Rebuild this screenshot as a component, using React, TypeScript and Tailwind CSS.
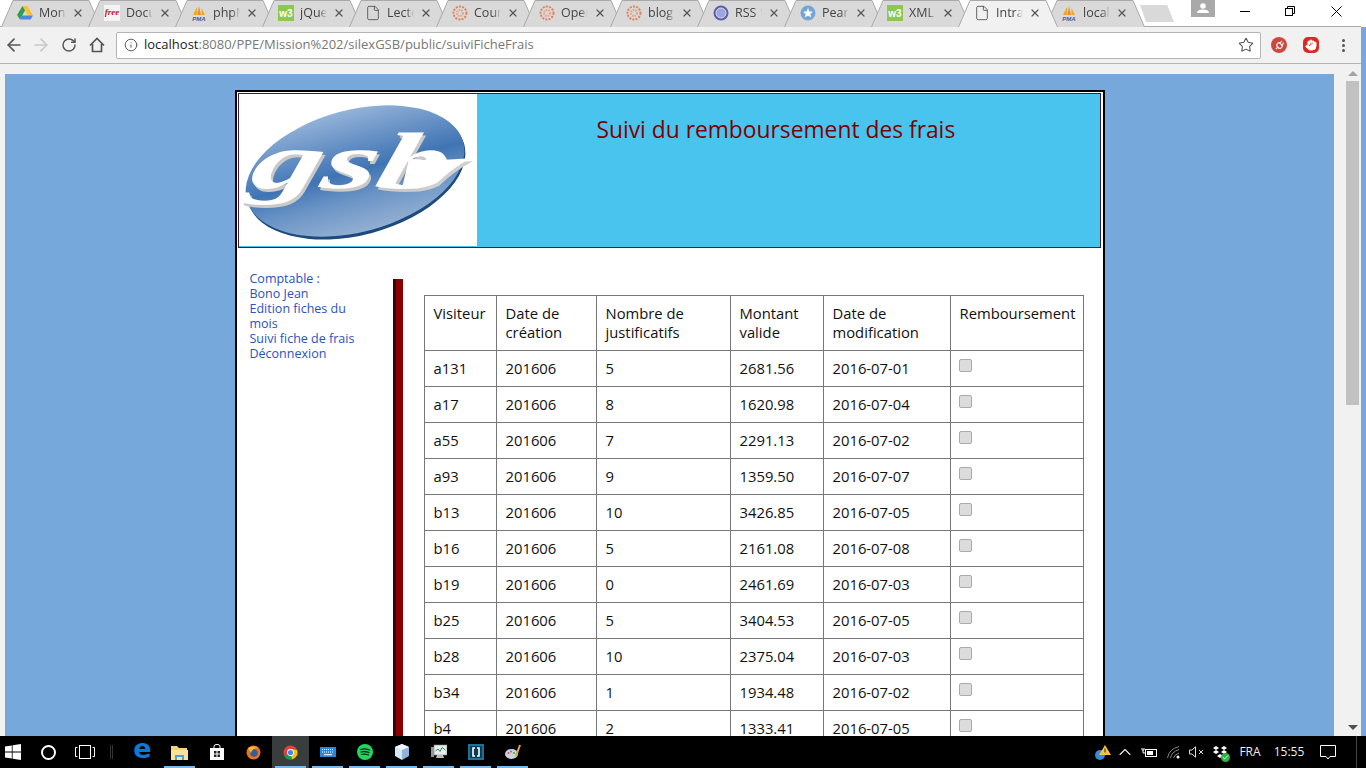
import React from 'react';
import { Star, File, Plug, Hand, RotateCw, Info, ChevronUp, ArrowLeft, ArrowRight, X, Check } from 'lucide-react';

const uiFont = "font-['Open_Sans','Noto_Sans',sans-serif]";

const rows = [
    ['a131', '201606', '5', '2681.56', '2016-07-01'],
    ['a17', '201606', '8', '1620.98', '2016-07-04'],
    ['a55', '201606', '7', '2291.13', '2016-07-02'],
    ['a93', '201606', '9', '1359.50', '2016-07-07'],
    ['b13', '201606', '10', '3426.85', '2016-07-05'],
    ['b16', '201606', '5', '2161.08', '2016-07-08'],
    ['b19', '201606', '0', '2461.69', '2016-07-03'],
    ['b25', '201606', '5', '3404.53', '2016-07-05'],
    ['b28', '201606', '10', '2375.04', '2016-07-03'],
    ['b34', '201606', '1', '1934.48', '2016-07-02'],
    ['b4', '201606', '2', '1333.41', '2016-07-05'],
];

const Drive = () => (
    <svg width="16" height="16" viewBox="0 0 16 16">
        <polygon points="5.5,1 10.5,1 16,10.5 11,10.5" fill="#fbc02d" />
        <polygon points="5.5,1 8,5.5 3,14.5 0,10" fill="#2e9e4f" />
        <polygon points="5,10.5 16,10.5 13.5,14.5 3,14.5" fill="#4c86e8" />
    </svg>
);

const Free = () => (
    <span className="flex w-4 h-4 items-center justify-center bg-[#f4f4f4] text-[9px] italic font-bold text-[#c8102e] font-['Liberation_Serif',serif]">free</span>
);

const Pma = () => (
    <svg width="16" height="16" viewBox="0 0 16 16">
        <path d="M2 10 L6 2 L6 10 Z" fill="#f6a623" />
        <path d="M6.5 10 L8 1 L10 10 Z" fill="#f28c1e" />
        <path d="M10.5 10 L10.5 3 L14 10 Z" fill="#f6a623" />
        <text x="8" y="15.5" textAnchor="middle" fontSize="6" fontWeight="700" fontStyle="italic" fill="#4a5a9a" fontFamily="Liberation Sans, sans-serif">PMA</text>
    </svg>
);

const W3 = () => (
    <span className="flex w-4 h-4 items-center justify-center bg-[#8cc84b] text-[10px] font-bold text-white font-['Liberation_Sans',sans-serif]">w3</span>
);

const Dotted = () => (
    <svg width="16" height="16" viewBox="0 0 16 16">
        <circle cx="8" cy="8" r="6.5" fill="none" stroke="#e0835a" strokeWidth="2" strokeDasharray="2 1.2" />
        <circle cx="8" cy="8" r="3" fill="none" stroke="#e9a080" strokeWidth="2" strokeDasharray="1.5 1" />
    </svg>
);

const Rss = () => (
    <svg width="16" height="16" viewBox="0 0 16 16">
        <circle cx="8" cy="8" r="7.5" fill="#5a5fa8" />
        <circle cx="8" cy="8" r="5" fill="#9da5e0" stroke="#d5d8f2" strokeWidth="1" />
    </svg>
);

const Pearl = () => (
    <svg width="16" height="16" viewBox="0 0 16 16">
        <circle cx="8" cy="8" r="7.5" fill="#74a5d6" />
        <polygon points="8,3 9.5,6.5 13,6.8 10.3,9 11.2,12.5 8,10.6 4.8,12.5 5.7,9 3,6.8 6.5,6.5" fill="#fff" />
    </svg>
);

const Page = () => <File size={16} strokeWidth={1.2} className="text-[#444]" />;

const tabs = [
    { title: 'Mon', icon: <Drive /> },
    { title: 'Docu', icon: <Free /> },
    { title: 'phpM', icon: <Pma /> },
    { title: 'jQue', icon: <W3 /> },
    { title: 'Lecte', icon: <Page /> },
    { title: 'Cour', icon: <Dotted /> },
    { title: 'Oper', icon: <Dotted /> },
    { title: 'blog', icon: <Dotted /> },
    { title: 'RSS f', icon: <Rss /> },
    { title: 'Pearl', icon: <Pearl /> },
    { title: 'XML', icon: <W3 /> },
    { title: 'Intra', icon: <Page />, active: true },
    { title: 'local', icon: <Pma /> },
];

const Tab = ({ title, icon, active }: { title: string; icon: React.ReactNode; active?: boolean }) => (
    <div className={`relative w-[100px] h-[27px] -mr-[13px] shrink-0 ${active ? 'z-10' : ''}`}>
        <svg className="absolute inset-0" width="100" height="27" viewBox="0 0 100 27">
            <path d="M0.5 27 L12 0.5 L88 0.5 L99.5 27" fill={active ? '#f1f1f1' : '#d9d9d9'} stroke="#a9a9a9" strokeWidth="1" />
        </svg>
        <div className="relative flex items-center h-[26px] pl-4">
            <span className="w-4 h-4 shrink-0">{icon}</span>
            <span className={`ml-[6px] w-[27px] overflow-hidden whitespace-nowrap text-[12.5px] text-[#444] [mask-image:linear-gradient(to_right,black_70%,transparent)] ${uiFont}`}>{title}</span>
            <X size={12} strokeWidth={2.4} className="ml-[6px] text-[#555]" />
        </div>
    </div>
);

const GsbLogo = () => (
    <svg width="238" height="152" viewBox="0 0 238 152" className="block shrink-0">
        <defs>
            <linearGradient id="oval" x1="0" y1="0" x2="0" y2="1">
                <stop offset="0" stopColor="#93b2d8" />
                <stop offset="0.5" stopColor="#3f74b4" />
                <stop offset="0.72" stopColor="#6a94c6" />
                <stop offset="1" stopColor="#93afd2" />
            </linearGradient>
        </defs>
        <rect width="238" height="152" fill="#fff" />
        <ellipse cx="117" cy="79" rx="112" ry="62" transform="rotate(-15 117 79)" fill="#1d4a7c" />
        <ellipse cx="116" cy="77" rx="112" ry="61" transform="rotate(-15 116 77)" fill="url(#oval)" />
        <g fontFamily="Liberation Serif, serif" fontWeight="700" fontStyle="italic" fontSize="80">
            <path d="M172 68 Q205 70 234 67 Q214 78 200 92 Q182 100 165 97 Z" fill="#cfcfcf" />
            <text x="0" y="97" fill="#c9c9c9" textLength="196" lengthAdjust="spacingAndGlyphs" transform="skewX(-14) translate(35 0)">gsb</text>
            <path d="M170 65 Q205 67 232 64 Q212 75 198 89 Q180 97 163 94 Z" fill="#fff" />
            <text x="-3" y="94" fill="#fff" textLength="196" lengthAdjust="spacingAndGlyphs" transform="skewX(-14) translate(35 0)">gsb</text>
        </g>
    </svg>
);

const TaskSlot = ({ children, on, hot }: { children: React.ReactNode; on?: boolean; hot?: boolean }) => (
    <div className={`relative flex w-[37px] h-full items-center justify-center ${hot ? 'bg-[#3a3d3d]' : ''}`}>
        {children}
        {on && <span className="absolute bottom-0 left-[3px] right-[3px] h-[2px] bg-[#76b9ed]" />}
    </div>
);

const Taskbar = () => (
    <div className="flex h-[32px] shrink-0 bg-black text-white">
        <div className="flex w-[30px] items-center pl-[5px]">
            <svg width="16" height="16" viewBox="0 0 16 16" fill="#fff">
                <polygon points="0,2.4 6.8,1.4 6.8,7.6 0,7.6" />
                <polygon points="7.6,1.3 16,0 16,7.6 7.6,7.6" />
                <polygon points="0,8.4 6.8,8.4 6.8,14.6 0,13.6" />
                <polygon points="7.6,8.4 16,8.4 16,16 7.6,14.7" />
            </svg>
        </div>
        <div className="flex w-[36px] items-center justify-center">
            <span className="w-[15px] h-[15px] rounded-full border-2 border-white" />
        </div>
        <div className="flex w-[38px] items-center justify-center">
            <svg width="20" height="14" viewBox="0 0 20 14" fill="none" stroke="#fff" strokeWidth="1">
                <rect x="4.5" y="0.5" width="11" height="13" />
                <path d="M2.5 2.5 H0.5 V11.5 H2.5 M17.5 2.5 H19.5 V11.5 H17.5" />
            </svg>
        </div>
        <div className="flex w-[20px] items-center pl-[6px]">
            <span className="w-[3px] h-[14px] border-x border-[#333]" />
        </div>
        <TaskSlot>
            <span className="text-[27px] leading-none font-bold text-[#0f78d4] -mt-[7px] font-['DejaVu_Sans',sans-serif]">e</span>
        </TaskSlot>
        <TaskSlot on>
            <svg width="17" height="15" viewBox="0 0 17 15">
                <path d="M0 1 H6 L8 3 H16 V14 H0 Z" fill="#f2d27a" />
                <rect x="0" y="5" width="17" height="10" fill="#fbe29a" />
                <path d="M4 15 V10 H13 V15 H11 V12 H6 V15 Z" fill="#4aa3df" />
            </svg>
        </TaskSlot>
        <TaskSlot>
            <svg width="14" height="16" viewBox="0 0 14 16">
                <path d="M0 4 H14 V16 H0 Z" fill="#fff" />
                <path d="M4 4 V2 Q4 .5 7 .5 Q10 .5 10 2 V4" fill="none" stroke="#fff" />
                <path d="M4 7 H6.5 V9.5 H4 Z M7.5 7 H10 V9.5 H7.5 Z M4 10.5 H6.5 V13 H4 Z M7.5 10.5 H10 V13 H7.5 Z" fill="#222" />
            </svg>
        </TaskSlot>
        <TaskSlot>
            <svg width="15" height="15" viewBox="0 0 15 15">
                <circle cx="7.5" cy="7.5" r="7" fill="#e8731a" />
                <circle cx="8" cy="8" r="3.8" fill="#3a5c9a" />
                <path d="M2 3 Q7 0 12 3 Q6 3 5 8 Z" fill="#f6b73c" />
            </svg>
        </TaskSlot>
        <TaskSlot on hot>
            <svg width="15" height="15" viewBox="0 0 15 15">
                <circle cx="7.5" cy="7.5" r="7" fill="#db4437" />
                <path d="M7.5 7.5 L1.4 11 A7 7 0 0 0 9 14.4 Z" fill="#0f9d58" />
                <path d="M7.5 7.5 L9 14.4 A7 7 0 0 0 14 5 L7.5 4 Z" fill="#f4c20d" />
                <circle cx="7.5" cy="7.5" r="3.4" fill="#fff" />
                <circle cx="7.5" cy="7.5" r="2.6" fill="#4285f4" />
            </svg>
        </TaskSlot>
        <TaskSlot on>
            <svg width="16" height="10" viewBox="0 0 16 10">
                <rect width="16" height="10" fill="#2f86d8" />
                <path d="M2 2.5 H14 M2 5 H14" stroke="#fff" strokeDasharray="1 1" />
                <path d="M4 7.7 H12" stroke="#fff" />
            </svg>
        </TaskSlot>
        <TaskSlot on>
            <svg width="16" height="16" viewBox="0 0 16 16" fill="none">
                <circle cx="8" cy="8" r="8" fill="#1ed760" />
                <path d="M3.5 5.5 Q8 4 12.5 6 M4 8 Q8 6.8 12 8.6 M4.5 10.5 Q8 9.5 11.5 11" stroke="#102a18" strokeWidth="1.3" strokeLinecap="round" />
            </svg>
        </TaskSlot>
        <TaskSlot on>
            <svg width="14" height="16" viewBox="0 0 14 16">
                <polygon points="7,0 14,3 14,12 7,16" fill="#8fb4de" />
                <polygon points="7,0 0,3 0,12 7,16" fill="#d8e6f5" />
                <polygon points="7,0 14,3 7,6 0,3" fill="#f1f6fb" />
            </svg>
        </TaskSlot>
        <TaskSlot on>
            <svg width="16" height="16" viewBox="0 0 16 16">
                <rect x="3" y="1" width="13" height="10" fill="#e8eef0" stroke="#888" strokeWidth="0.6" />
                <path d="M4.5 7 L7 5 L9 7.5 L11 3.5 L14.5 6" fill="none" stroke="#2f8f5a" />
                <rect x="0" y="3" width="3" height="10" fill="#8d9a9a" />
                <path d="M6 11 H12 L13 14 H5 Z" fill="#bbb" />
            </svg>
        </TaskSlot>
        <TaskSlot on>
            <svg width="16" height="16" viewBox="0 0 16 16">
                <rect width="16" height="16" fill="#1f6f96" />
                <rect x="2" y="2" width="12" height="12" fill="#0c3d58" />
                <path d="M7 4 H5 V12 H7 M9 4 H11 V12 H9" fill="none" stroke="#fff" strokeWidth="1.6" />
            </svg>
        </TaskSlot>
        <TaskSlot on>
            <svg width="16" height="16" viewBox="0 0 16 16">
                <ellipse cx="6.5" cy="10" rx="6.5" ry="5" fill="#c9d3de" />
                <circle cx="3.5" cy="9" r="1" fill="#e0483c" />
                <circle cx="6" cy="7.5" r="1" fill="#3b8ad9" />
                <circle cx="9" cy="9" r="1" fill="#3fae49" />
                <path d="M11 12 L15 1" stroke="#e8a33d" strokeWidth="2" />
            </svg>
        </TaskSlot>
        <div className="ml-auto flex h-full items-center text-[13px] text-[#eee]">
            <div className="flex w-[22px] justify-center">
                <svg width="16" height="15" viewBox="0 0 16 15">
                    <circle cx="5" cy="10" r="5" fill="#3b8ad9" />
                    <polygon points="10,0 16,10 4,10" fill="#f6c244" />
                    <rect x="9.5" y="3.5" width="1" height="4" fill="#222" />
                </svg>
            </div>
            <div className="flex w-[22px] justify-center"><ChevronUp size={20} strokeWidth={1.3} /></div>
            <div className="flex w-[26px] justify-center">
                <svg width="17" height="11" viewBox="0 0 17 11" fill="none" stroke="#fff">
                    <rect x="4.5" y="2.5" width="11" height="7" />
                    <rect x="6" y="4" width="6" height="4" fill="#fff" stroke="none" />
                    <path d="M1 1 V3 H3 V1 M2 3 V6 H5" />
                </svg>
            </div>
            <div className="flex w-[24px] justify-center">
                <svg width="14" height="13" viewBox="0 0 14 13" fill="none" stroke="#888">
                    <path d="M0.5 12 Q2 3 12 0.5 M3.5 12 Q4.5 6 12 3.5 M6.5 12 Q7 9 12 7" />
                    <circle cx="11" cy="11" r="1.5" fill="#fff" stroke="none" />
                </svg>
            </div>
            <div className="flex w-[20px] justify-center">
                <svg width="15" height="12" viewBox="0 0 15 12" fill="none" stroke="#ddd">
                    <path d="M0.5 4 H3 L6.5 0.8 V11.2 L3 8 H0.5 Z" />
                    <path d="M10 4 L14 8 M14 4 L10 8" />
                </svg>
            </div>
            <div className="relative flex w-[28px] justify-center">
                <svg width="14" height="13" viewBox="0 0 14 13" fill="#fff">
                    <polygon points="3,0 6,2 3,4 0,2" />
                    <polygon points="11,0 14,2 11,4 8,2" />
                    <polygon points="3,4 6,6 3,8 0,6" />
                    <polygon points="11,4 14,6 11,8 8,6" />
                    <polygon points="7,8 10,10 7,12 4,10" />
                </svg>
                <span className="absolute left-[15px] top-[7px] flex w-[9px] h-[9px] items-center justify-center rounded-full bg-[#2fb344]">
                    <Check size={7} strokeWidth={3} className="text-white" />
                </span>
            </div>
            <div className={`flex w-[32px] justify-center text-[12px] ${uiFont}`}>FRA</div>
            <div className={`flex w-[46px] justify-center text-[12px] ${uiFont}`}>15:55</div>
            <div className="flex w-[32px] justify-center">
                <svg width="16" height="16" viewBox="0 0 16 16" fill="none" stroke="#fff">
                    <path d="M0.5 1.5 H15.5 V12.5 H10 L8 15 L6 12.5 H0.5 Z" />
                </svg>
            </div>
            <div className="flex w-[22px] h-full justify-center pl-[2px]">
                <span className="w-px h-full bg-[#444]" />
            </div>
        </div>
    </div>
);

const App: React.FC = () => {
    return (
        <div className="flex flex-col w-[1366px] h-[768px] overflow-hidden bg-[#76a8dc]">
            <div className="flex h-[27px] shrink-0 bg-white">
                <div className="flex w-[1361px] border-b border-[#a9a9a9]">
                    <div className="flex pl-px">
                        {tabs.map((t) => (
                            <Tab key={t.title} title={t.title} icon={t.icon} active={t.active} />
                        ))}
                    </div>
                    <div className="ml-[8px] mt-[5px] w-[34px] h-[17px] bg-[#d9d9d9] [clip-path:polygon(0_0,80%_0,100%_100%,18%_100%)]" />
                    <div className="flex ml-[17px] w-[24px] h-[17px] items-center justify-center bg-[#a9a9a9]">
                        <svg width="12" height="11" viewBox="0 0 12 11" fill="#fff">
                            <circle cx="6" cy="3" r="2.8" />
                            <path d="M0 10 Q0 6.5 6 6.5 Q12 6.5 12 10 Z" />
                        </svg>
                    </div>
                    <div className="flex ml-auto h-[22px] text-black">
                        <div className="flex w-[48px] items-center justify-center">
                            <span className="w-[10px] h-px bg-black" />
                        </div>
                        <div className="flex w-[42px] items-center justify-center">
                            <svg width="10" height="10" viewBox="0 0 10 10" fill="none" stroke="#000">
                                <rect x="0.5" y="2.5" width="7" height="7" />
                                <path d="M2.5 2.5 V0.5 H9.5 V7.5 H7.5" />
                            </svg>
                        </div>
                        <div className="flex w-[50px] items-center justify-center">
                            <svg width="11" height="11" viewBox="0 0 11 11" stroke="#000">
                                <path d="M0.5 0.5 L10.5 10.5 M10.5 0.5 L0.5 10.5" />
                            </svg>
                        </div>
                    </div>
                </div>
            </div>

            <div className="flex h-[37px] w-[1361px] shrink-0 items-center border-b border-[#b5b5b5] bg-[#f1f1f1] text-[#555]">
                <div className="flex w-[27px] justify-center"><ArrowLeft size={20} strokeWidth={2} /></div>
                <div className="flex w-[28px] justify-center"><ArrowRight size={20} strokeWidth={2} className="text-[#c8c8c8]" /></div>
                <div className="flex w-[28px] justify-center"><RotateCw size={16} strokeWidth={2.2} /></div>
                <div className="flex w-[28px] justify-center">
                    <svg width="16" height="16" viewBox="0 0 16 16" fill="none" stroke="#555" strokeWidth="1.7">
                        <path d="M1 8.5 L8 1.5 L15 8.5 M3.5 7 V14.5 H12.5 V7" />
                    </svg>
                </div>
                <div className="flex flex-1 h-[27px] items-center ml-[5px] rounded-[2px] border border-[#b5b5b5] bg-white">
                    <Info size={14} strokeWidth={1.6} className="ml-[7px] text-[#555]" />
                    <span className={`ml-[6px] text-[13px] text-[#777] whitespace-nowrap ${uiFont}`}>
                        <span className="text-[#222]">localhost</span>:8080/PPE/Mission%202/silexGSB/public/suiviFicheFrais
                    </span>
                    <Star size={16} strokeWidth={1.6} className="ml-auto mr-[6px] text-[#555]" />
                </div>
                <div className="flex w-[36px] justify-center">
                    <span className="flex w-4 h-4 items-center justify-center rounded-full bg-[#d0483c]">
                        <Plug size={11} strokeWidth={2.4} className="text-white rotate-45" />
                    </span>
                </div>
                <div className="flex w-[28px] justify-center">
                    <span className="flex w-4 h-4 items-center justify-center rounded-[5px] bg-[#dc2a22]">
                        <Hand size={12} strokeWidth={2} className="text-white fill-white" />
                    </span>
                </div>
                <div className="flex flex-col w-[36px] items-center gap-[2px]">
                    <span className="w-[3px] h-[3px] rounded-full bg-[#555]" />
                    <span className="w-[3px] h-[3px] rounded-full bg-[#555]" />
                    <span className="w-[3px] h-[3px] rounded-full bg-[#555]" />
                </div>
            </div>

            <div className="flex flex-1 min-h-0">
                <div className="flex w-[1361px] shrink-0">
                    <div className="flex flex-col w-[1334px] shrink-0 pt-[10px] pl-[5px] bg-[#f1f1f1]">
                        <div className="flex-1 min-h-0 overflow-hidden bg-[#76a8dc] pt-4">
                            <div className="mx-auto w-[870px] border-2 border-black bg-white">
                                <div className="flex ml-px mt-px w-[863px] h-[155px] border border-[#4a1a2a] bg-[#48c4ef]">
                                    <GsbLogo />
                                    <h1 className={`pl-[120px] pt-[21px] text-[22.8px] leading-[30px] text-[#800000] ${uiFont}`}>Suivi du remboursement des frais</h1>
                                </div>
                                <div className="flex pt-[23px]">
                                    <div className={`ml-[13px] mr-[31px] w-[112px] text-[12.5px] leading-[15px] text-[#2a52be] ${uiFont}`}>
                                        <div>Comptable :</div>
                                        <div>Bono Jean</div>
                                        <div>Edition fiches du mois</div>
                                        <div>Suivi fiche de frais</div>
                                        <div>Déconnexion</div>
                                    </div>
                                    <div className="mt-[8px] w-[10px] shrink-0 bg-[linear-gradient(to_right,#3c0008_30%,#8b0000_30%)]" />
                                    <div className="ml-[21px] mt-[24px]">
                                        <table className={`w-[660px] table-fixed border-collapse text-[14.8px] leading-[19px] text-[#111] ${uiFont}`}>
                                            <colgroup>
                                                <col className="w-[72px]" />
                                                <col className="w-[100px]" />
                                                <col className="w-[134px]" />
                                                <col className="w-[93px]" />
                                                <col className="w-[127px]" />
                                                <col className="w-[133px]" />
                                            </colgroup>
                                            <thead>
                                                <tr>
                                                    {['Visiteur', 'Date de création', 'Nombre de justificatifs', 'Montant valide', 'Date de modification', 'Remboursement'].map((h) => (
                                                        <th key={h} className="border border-[#777] px-[9px] py-2 text-left align-top font-normal">{h}</th>
                                                    ))}
                                                </tr>
                                            </thead>
                                            <tbody>
                                                {rows.map((r) => (
                                                    <tr key={r[0]}>
                                                        {r.map((c, i) => (
                                                            <td key={i} className="border border-[#777] px-[9px] py-2 align-top">{c}</td>
                                                        ))}
                                                        <td className="border border-[#777] px-[9px] py-2 align-top">
                                                            <input type="checkbox" disabled className="block appearance-none -ml-px w-[13px] h-[13px] rounded-[2px] border border-[#aaa] bg-[#dcdcdc]" />
                                                        </td>
                                                    </tr>
                                                ))}
                                            </tbody>
                                        </table>
                                    </div>
                                </div>
                            </div>
                        </div>
                    </div>
                    <div className="flex flex-col items-center w-[27px] shrink-0 pl-[10px] bg-[#f1f1f1]">
                        <span className="mt-[7px] w-0 h-0 border-x-[5px] border-x-transparent border-b-[5px] border-b-[#a3a3a3]" />
                        <div className="mt-[5px] w-[13px] h-[324px] bg-[#c1c1c1]" />
                        <span className="mt-auto mb-[6px] w-0 h-0 border-x-[5px] border-x-transparent border-t-[5px] border-t-[#505050]" />
                    </div>
                </div>
            </div>

            <Taskbar />
        </div>
    );
};

export default App;
